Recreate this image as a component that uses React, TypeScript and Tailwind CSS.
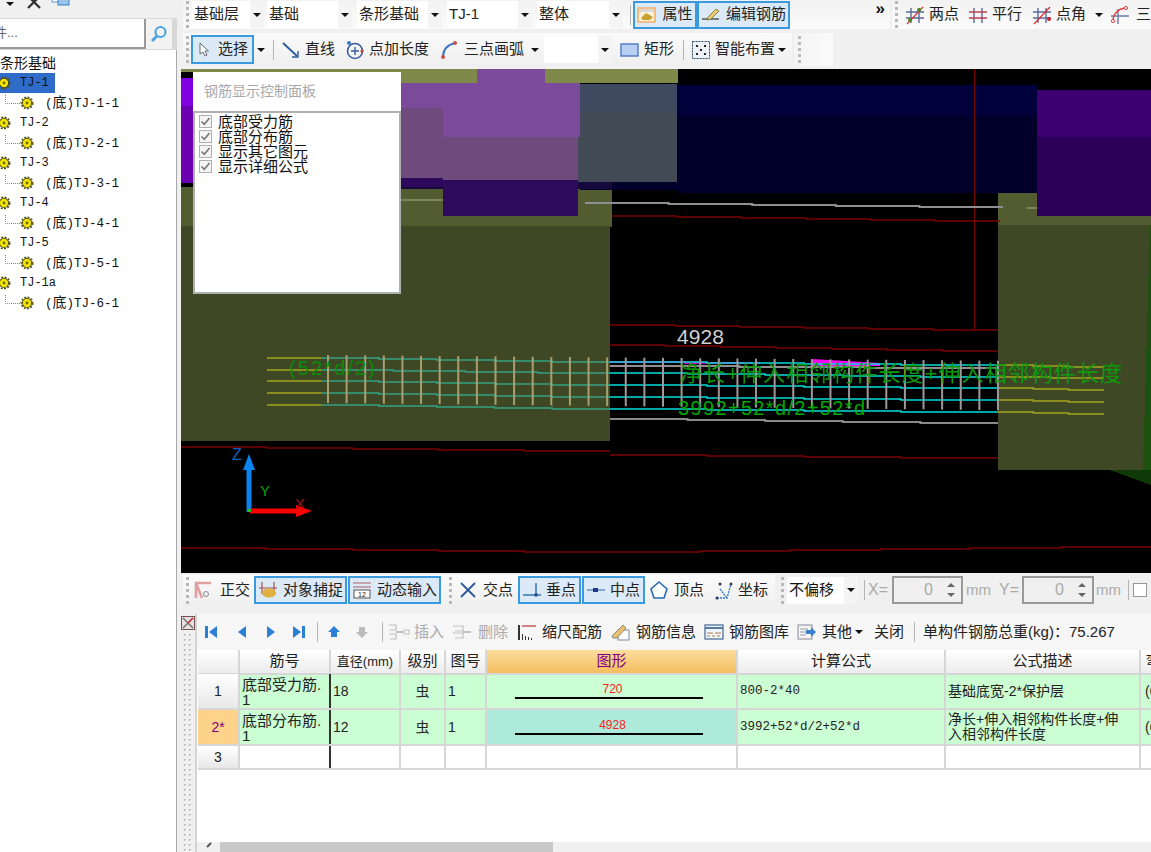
import type { ReactNode } from 'react';

const mono = "font-['Liberation_Mono','Noto_Sans_CJK_SC',monospace]";

function Caret({ className = '' }: { className?: string }) {
  return <span className={`inline-block h-0 w-0 shrink-0 border-x-[4px] border-t-[4px] border-x-transparent border-t-[#111] ${className}`} />;
}

function Grip({ className = '' }: { className?: string }) {
  return (
    <div className={`flex w-[3px] shrink-0 flex-col gap-[3px] ${className}`}>
      {[0, 1, 2, 3, 4].map((i) => (
        <span key={i} className="h-[3px] w-[3px] bg-[#b8b8b8]" />
      ))}
    </div>
  );
}

function Sep({ className = '' }: { className?: string }) {
  return <div className={`h-[20px] w-px shrink-0 bg-[#b4b4b4] ${className}`} />;
}

function Combo({ label, className, arrow = true }: { label: string; className: string; arrow?: boolean }) {
  return (
    <div className={`flex h-[27px] shrink-0 items-center justify-between bg-white pl-[2px] ${className}`}>
      <span className="whitespace-nowrap">{label}</span>
      {arrow && (
        <span className="flex h-full w-[14px] items-center justify-center bg-[#f4f4f4]">
          <Caret />
        </span>
      )}
    </div>
  );
}

function Tool({
  icon,
  label,
  className = '',
  gap = 'gap-[4px]',
  muted = false,
}: {
  icon: ReactNode;
  label: string;
  className?: string;
  gap?: string;
  muted?: boolean;
}) {
  return (
    <div className={`flex shrink-0 items-center whitespace-nowrap ${gap} ${muted ? 'text-[#aaaaaa]' : ''} ${className}`}>
      {icon}
      <span>{label}</span>
    </div>
  );
}

function ActiveBtn({ icon, label, className }: { icon: ReactNode; label: string; className: string }) {
  return (
    <div className={`flex h-[28px] shrink-0 items-center justify-center gap-[5px] whitespace-nowrap border-2 border-[#3a9ae0] bg-[#dbeaf6] ${className}`}>
      {icon}
      <span>{label}</span>
    </div>
  );
}

function Ico({ children, w = 20 }: { children: ReactNode; w?: number }) {
  return (
    <svg width={w} height="20" viewBox={`0 0 ${w} 20`} className="shrink-0" fill="none">
      {children}
    </svg>
  );
}

function Gear({ className = '' }: { className?: string }) {
  return (
    <svg width="14" height="14" viewBox="0 0 14 14" className={`shrink-0 ${className}`}>
      <circle cx="7" cy="7" r="5" fill="#3a3a00" />
      <circle cx="7" cy="7" r="5.8" fill="none" stroke="#55551a" strokeWidth="1.4" strokeDasharray="2 1.4" />
      <circle cx="7" cy="7" r="4.2" fill="#f4e400" />
      <circle cx="7" cy="7" r="1.4" fill="#6a6a10" />
    </svg>
  );
}

function Check() {
  return (
    <span className="flex h-[13px] w-[13px] shrink-0 items-center justify-center border border-[#b0b0b0] bg-[#f4f4f4]">
      <svg width="11" height="11" viewBox="0 0 11 11" fill="none">
        <path d="M1.5 5.5 4.3 8.3 9.5 2" stroke="#777" strokeWidth="1.6" />
      </svg>
    </span>
  );
}

function Spin({ className }: { className: string }) {
  return (
    <div className={`flex h-[28px] shrink-0 items-center justify-between border-2 border-[#999999] pl-1 pr-[6px] text-[#aaaaaa] ${className}`}>
      <span className="flex-1 pr-[14px] text-right text-[16px]">0</span>
      <span className="flex flex-col gap-[6px]">
        <span className="h-0 w-0 border-x-[4px] border-b-[4px] border-x-transparent border-b-[#666]" />
        <span className="h-0 w-0 border-x-[4px] border-t-[4px] border-x-transparent border-t-[#666]" />
      </span>
    </div>
  );
}

// stepped line, the 3D view draws sloped edges as one pixel jogs
function steps(x0: number, y0: number, x1: number, y1: number) {
  const n = Math.max(1, Math.round(Math.abs(y1 - y0)));
  const pts: string[] = [`${x0},${y0}`];
  for (let i = 1; i <= n; i++) {
    const x = x0 + ((x1 - x0) * i) / (n + 1);
    const dir = y1 > y0 ? 1 : -1;
    pts.push(`${x},${y0 + dir * (i - 1)}`, `${x},${y0 + dir * i}`);
  }
  pts.push(`${x1},${y1}`);
  return pts.join(' ');
}

const rebarRows = [
  { a: 358, b: 362, c: 365, d: 367 },
  { a: 370, b: 373, c: 377, d: 378 },
  { a: 381, b: 385, c: 388, d: 390 },
  { a: 393, b: 397, c: 400, d: 402 },
  { a: 405, b: 409, c: 412, d: 414 },
];

const bars = Array.from({ length: 37 }, (_, i) => 328 + i * 18.61);

const redLines: [number, number, number, number][] = [
  [612, 216, 1000, 221],
  [610, 325, 998, 330],
  [610, 345, 998, 351],
  [610, 455, 998, 458],
  [181, 447, 610, 451],
  [181, 548, 610, 552],
  [610, 552, 1151, 547],
];

function Scene() {
  return (
    <svg width="970" height="504" viewBox="181 69 970 504" className="block" shapeRendering="crispEdges">
      <rect x="181" y="69" width="970" height="504" fill="#000" />

      {/* olive top strip */}
      <rect x="181" y="69" width="497" height="14" fill="#7f8a4a" />
      <rect x="477" y="69" width="68" height="14" fill="#7b4a9a" />
      <rect x="181" y="72" width="12" height="6" fill="#000" />

      {/* left column */}
      <rect x="181" y="78" width="220" height="30" fill="#8000e0" />
      <rect x="181" y="106" width="220" height="77" fill="#6a00b0" />

      {/* footing blocks */}
      <rect x="181" y="187" width="431" height="40" fill="#525c30" />
      <rect x="181" y="226" width="429" height="215" fill="#3f4824" />
      <rect x="998" y="193" width="153" height="33" fill="#525c30" />
      <rect x="998" y="225" width="153" height="245" fill="#3f4824" />
      <polygon points="1150,225 1151,225 1151,470 1143,470" fill="#1e5010" />
      <polygon points="1110,470 1151,470 1151,485" fill="#0f3a08" />

      {/* beam and columns */}
      <rect x="580" y="182" width="457" height="8" fill="#00002a" />
      <rect x="400" y="181" width="212" height="8" fill="#14083c" />
      <rect x="677" y="85" width="360" height="30" fill="#00003a" />
      <rect x="677" y="115" width="360" height="78" fill="#00002a" />
      <rect x="578" y="84" width="99" height="27" fill="#3f4a60" />
      <rect x="578" y="111" width="99" height="71" fill="#414a55" />
      <rect x="400" y="83" width="180" height="25" fill="#7b4a9a" />
      <rect x="443" y="108" width="137" height="29" fill="#7b4a9a" />
      <rect x="400" y="108" width="43" height="70" fill="#6f4a7c" />
      <rect x="443" y="137" width="135" height="43" fill="#6f4a7c" />
      <rect x="443" y="180" width="135" height="36" fill="#2d0a5c" />
      <rect x="400" y="178" width="43" height="9" fill="#2d0a5c" />
      <rect x="1037" y="90" width="114" height="47" fill="#3c0070" />
      <rect x="1037" y="137" width="114" height="79" fill="#2c0058" />

      {/* thin lines need antialiasing, crisp edges drops parts of them */}
      <g shapeRendering="geometricPrecision">
        {/* red outline */}
        <line x1="974.5" y1="69" x2="974.5" y2="330" stroke="#7a0000" strokeWidth="1" />
        {redLines.map(([a, b, c, d], i) => (
          <polyline key={i} points={steps(a, b, c, d)} fill="none" stroke="#7a0000" strokeWidth="1.5" />
        ))}

        {/* grey lines */}
        <polyline points={steps(585, 203, 1003, 207)} fill="none" stroke="#909090" strokeWidth="2" />
        <line x1="400" y1="200" x2="443" y2="200" stroke="#a8a890" strokeWidth="1" />
        <line x1="1027" y1="208" x2="1037" y2="208" stroke="#a8a890" strokeWidth="1" />
        <polyline points={steps(610, 419, 998, 423)} fill="none" stroke="#888" strokeWidth="2" />

        {/* rebar */}
        <polyline points={steps(610, 362, 760, 363)} fill="none" stroke="#ff00ff" strokeWidth="1.5" />
        <polygon points="812,359 880,363 880,366 812,366" fill="#ff00ff" />
        <polyline points={steps(610, 366, 998, 368)} fill="none" stroke="#909090" strokeWidth="2" />
        {rebarRows.map((r, i) => (
          <g key={i} fill="none" strokeWidth="1.5">
            <line x1="267" y1={r.a} x2="321" y2={r.a} stroke="#a4a41e" />
            <polyline points={steps(321, r.a, 610, r.b)} stroke="#36a084" />
            <polyline points={steps(610, r.b, 998, r.c)} stroke="#00dcdc" />
            <polyline points={steps(998, r.c, 1104, r.d)} stroke="#a4a41e" />
          </g>
        ))}
        {bars.map((x, i) => (
          <line
            key={i}
            x1={x}
            y1={355 + i * 0.16}
            x2={x}
            y2={403 + i * 0.2}
            stroke={x < 610 ? '#a8a070' : '#a09898'}
            strokeWidth="2"
          />
        ))}
      </g>

      {/* labels */}
      <g shapeRendering="auto">
        <text x="677" y="344" fontSize="21" fill="#d0d0d0" textLength="47">4928</text>
        <text x="289" y="375" fontSize="20" fill="#0a8a0a" textLength="86">(52*d/2)</text>
        <text x="680" y="381" fontSize="22" fill="#0c9a0c" textLength="442">净长+伸入相邻构件长度+伸入相邻构件长度</text>
        <text x="678" y="415" fontSize="20" fill="#00a800" textLength="187">3992+52*d/2+52*d</text>

        {/* axes */}
        <rect x="246.5" y="468" width="5" height="44" fill="#0a84f0" />
        <polygon points="249,454 255,470 243,470" fill="#0a84f0" />
        <rect x="250" y="508.5" width="48" height="5" fill="#ff0000" />
        <polygon points="312,511 296,505 296,517" fill="#ff0000" />
        <rect x="248" y="509" width="3" height="3" fill="#20c020" />
        <text x="232" y="460" fontSize="16" fill="#1060c0">Z</text>
        <text x="260" y="496" fontSize="15" fill="#10a010">Y</text>
        <text x="295" y="509" fontSize="15" fill="#a01010">X</text>
      </g>
    </svg>
  );
}

function ControlPanel() {
  const items = ['底部受力筋', '底部分布筋', '显示其它图元', '显示详细公式'];
  return (
    <div className="absolute left-[12px] top-[3px] flex h-[222px] w-[208px] flex-col bg-white">
      <div className="h-[39px] pl-[11px] pt-[9px] text-[14px] text-[#a8a8a8]">钢筋显示控制面板</div>
      <div className="flex-1 border-2 border-[#b0b0b0] pl-[4px] pt-[1px]">
        {items.map((t) => (
          <div key={t} className="flex h-[15px] items-center gap-[6px] text-[15px] leading-[15px] text-[#111]">
            <Check />
            <span>{t}</span>
          </div>
        ))}
      </div>
    </div>
  );
}

function Tree() {
  const nodes = [
    ['TJ-1', 'TJ-1-1'],
    ['TJ-2', 'TJ-2-1'],
    ['TJ-3', 'TJ-3-1'],
    ['TJ-4', 'TJ-4-1'],
    ['TJ-5', 'TJ-5-1'],
    ['TJ-1a', 'TJ-6-1'],
  ];
  return (
    <div className="flex-1 border-r border-[#a8a8a8] bg-white pt-[3px] text-[14px] text-[#111]">
      <div className="flex h-[20px] items-center whitespace-nowrap">条形基础</div>
      {nodes.map(([name, sub], i) => (
        <div key={name}>
          <div className={`flex h-[20px] items-center ${i === 0 ? 'w-[55px] bg-[#2f6bc8]' : ''}`}>
            <Gear className="-ml-[3px]" />
            <span className={`ml-[9px] text-[12px] ${mono}`}>{name}</span>
          </div>
          <div className="flex h-[20px] items-center">
            <span className="ml-[5px] mb-[8px] h-[9px] w-[15px] border-b border-l border-dotted border-[#888]" />
            <Gear />
            <span className={`ml-[11px] whitespace-nowrap text-[12.5px] ${mono}`}>
              (<span className="text-[14px]">底</span>){sub}
            </span>
          </div>
        </div>
      ))}
    </div>
  );
}

const head = ['', '筋号', '直径(mm)', '级别', '图号', '图形', '计算公式', '公式描述', '弯曲调整'];
const cols = 'grid w-[1014px] grid-cols-[42px_91px_70px_45px_41px_251px_208px_195px_71px]';
const cell = 'border-b-2 border-r-2 border-[#d6d6d6]';

function RebarTable() {
  const rows = [
    { no: '1', name: '底部受力筋.', dia: '18', len: '720', calc: '800-2*40', desc: ['基础底宽-2*保护层'] },
    { no: '2*', name: '底部分布筋.', dia: '12', len: '4928', calc: '3992+52*d/2+52*d', desc: ['净长+伸入相邻构件长度+伸', '入相邻构件长度'] },
  ];
  return (
    <div className="ml-[1px] text-[#222]">
      <div className={`${cols} h-[24px]`}>
        {head.map((h, i) => (
          <div
            key={i}
            className={`flex items-center justify-center whitespace-nowrap ${cell} ${
              i === 5 ? 'bg-gradient-to-b from-[#fbdc9c] to-[#f4bf5e] text-[#800080]' : 'bg-gradient-to-b from-white to-[#ececec]'
            } ${i === 2 ? 'text-[13px]' : 'text-[15px]'}`}
          >
            {h}
          </div>
        ))}
      </div>
      {rows.map((r, i) => (
        <div key={r.no} className={`${cols} h-[36px] bg-[#ccfed4]`}>
          <div className={`flex items-center justify-center text-[14px] ${cell} ${i === 1 ? 'bg-[#fdd28a] text-[#800080]' : 'bg-gradient-to-b from-white to-[#e8e8e8]'}`}>{r.no}</div>
          <div className={`relative pl-[2px] pt-[3px] text-[15px] leading-[15px] ${cell}`}>
            {r.name}
            <br />1
            <span className="absolute -right-[2px] top-0 h-full w-[2px] bg-[#333]" />
          </div>
          <div className={`flex items-center pl-[2px] text-[14px] ${cell}`}>{r.dia}</div>
          <div className={`flex items-center justify-center text-[14px] ${cell}`}>虫</div>
          <div className={`flex items-center pl-[2px] text-[14px] ${cell}`}>1</div>
          <div className={`flex flex-col items-center pr-[6px] pt-[9px] text-[12px] leading-[12px] text-[#ff2020] ${cell} ${i === 1 ? 'bg-[#aeeada]' : ''}`}>
            <span className="ml-[8px]">{r.len}</span>
            <span className="mt-[2px] h-[2px] w-[188px] bg-black" />
          </div>
          <div className={`flex items-center pl-[2px] text-[12.5px] whitespace-nowrap ${mono} ${cell}`}>{r.calc}</div>
          <div className={`flex flex-col justify-center pl-[2px] text-[14px] leading-[15px] whitespace-nowrap ${cell}`}>
            {r.desc.map((d) => (
              <span key={d}>{d}</span>
            ))}
          </div>
          <div className={`flex items-center pl-[4px] text-[14px] ${cell}`}>(0)</div>
        </div>
      ))}
      <div className={`${cols} h-[24px] bg-white`}>
        {head.map((_, i) => (
          <div key={i} className={`relative flex items-center justify-center text-[14px] ${cell} ${i === 0 ? 'bg-gradient-to-b from-white to-[#e8e8e8]' : ''}`}>
            {i === 0 ? '3' : ''}
            {i === 1 && <span className="absolute -right-[2px] top-0 h-full w-[2px] bg-[#333]" />}
          </div>
        ))}
      </div>
    </div>
  );
}

function NavIcon({ d, fill = '#2b7fd6' }: { d: string; fill?: string }) {
  return (
    <svg width="14" height="16" viewBox="0 0 14 16" className="shrink-0">
      <path d={d} fill={fill} />
    </svg>
  );
}

export default function App() {
  return (
    <div className="flex h-[852px] w-[1151px] overflow-hidden bg-[#f0f0f0] font-['Liberation_Sans','Noto_Sans_CJK_SC',sans-serif] text-[15px] text-[#222]">
      {/* left panel */}
      <aside className="flex w-[177px] shrink-0 flex-col">
        <div className="relative flex h-[18px] items-center overflow-hidden">
          <Caret className="ml-[6px] -mt-[10px]" />
          <svg width="16" height="16" viewBox="0 0 16 16" className="ml-[12px] -mt-[12px]">
            <path d="M2 1 14 13M14 1 2 13" stroke="#333" strokeWidth="2.4" />
          </svg>
          <svg width="20" height="18" viewBox="0 0 20 18" className="ml-[9px] -mt-[12px]">
            <rect x="1" y="0" width="12" height="8" fill="#fff" stroke="#5a9ad6" />
            <rect x="7" y="0" width="11" height="11" fill="#9cc4ea" stroke="#3a80c6" />
          </svg>
        </div>
        <div className="flex h-[32px] items-start bg-[#d8d8d8] pt-[1px]">
          <div className="flex h-[30px] w-[146px] items-center border-b-2 border-r-2 border-[#9a9a9a] bg-white text-[13px] text-[#666]">
            <span className="-ml-[6px] whitespace-nowrap">件...</span>
          </div>
          <div className="flex h-[30px] w-[26px] items-center justify-center bg-[#f2f2f2]">
            <svg width="18" height="18" viewBox="0 0 18 18" fill="none">
              <circle cx="10.5" cy="7" r="5" stroke="#4da3e0" strokeWidth="2.2" />
              <path d="M7 11 2 16" stroke="#4da3e0" strokeWidth="3" />
            </svg>
          </div>
        </div>
        <Tree />
      </aside>

      <main className="ml-[4px] flex w-[970px] shrink-0 flex-col overflow-hidden">
        {/* row 1 */}
        <div className="flex h-[29px] items-center">
          <div className="ml-[2px] flex h-[29px] w-[707px] shrink-0 items-center bg-gradient-to-b from-[#f2f2f2] to-[#fbfbfb]">
            <Grip className="ml-[3px]" />
            <Combo label="基础层" className="ml-[3px] w-[72px]" />
            <Combo label="基础" className="ml-[3px] w-[85px]" />
            <Combo label="条形基础" className="ml-[5px] w-[85px]" />
            <Combo label="TJ-1" className="ml-[5px] w-[85px]" />
            <Combo label="整体" className="ml-[5px] w-[86px]" />
            <Sep className="ml-[7px]" />
            <ActiveBtn
              className="ml-[2px] w-[64px]"
              label="属性"
              icon={
                <Ico w={20}>
                  <rect x="1" y="3" width="17" height="14" fill="#fdf1d8" stroke="#f0a860" strokeWidth="1.4" />
                  <rect x="2" y="4" width="15" height="3" fill="#d8d8d8" />
                  <path d="M4 13 9 8l7 4-3 3H6Z" fill="#c8a030" />
                </Ico>
              }
            />
            <ActiveBtn
              className="w-[93px]"
              label="编辑钢筋"
              icon={
                <Ico w={20}>
                  <path d="M1 14h17" stroke="#333" strokeWidth="1.2" />
                  <path d="M7 12 15 4l3 2-8 8-4 1Z" fill="#e8c870" stroke="#7a6a3a" strokeWidth="0.8" />
                </Ico>
              }
            />
            <span className="ml-auto mr-[5px] -mt-[12px] text-[17px] font-bold leading-none text-[#111]">»</span>
          </div>
          <div className="ml-[2px] flex h-[29px] flex-1 items-center whitespace-nowrap bg-gradient-to-b from-[#f2f2f2] to-[#fbfbfb]">
            <Grip className="ml-[3px]" />
            <Tool
              className="ml-[7px]"
              label="两点"
              icon={
                <Ico>
                  <path d="M6 3v15M14 3v15M1 7h18M1 13h18" stroke="#5a6a9a" strokeWidth="1.4" />
                  <path d="M2 19 18 2" stroke="#e03030" strokeWidth="1.2" />
                  <circle cx="5" cy="15" r="2" fill="#4a8a20" />
                  <circle cx="14" cy="5" r="2" fill="#4a8a20" />
                </Ico>
              }
            />
            <Tool
              className="ml-[9px]"
              label="平行"
              icon={
                <Ico>
                  <path d="M6 3v15M14 3v15" stroke="#5a6a9a" strokeWidth="1.4" />
                  <path d="M1 7h18M1 13h18" stroke="#c04050" strokeWidth="1.4" />
                </Ico>
              }
            />
            <Tool
              className="ml-[10px]"
              label="点角"
              icon={
                <Ico>
                  <path d="M6 3v15M14 3v15M1 7h18M1 13h18" stroke="#5a6a9a" strokeWidth="1.4" />
                  <path d="M2 19 18 2" stroke="#e03030" strokeWidth="1.2" />
                  <circle cx="17" cy="14" r="2" fill="#d02020" />
                </Ico>
              }
            />
            <Caret className="ml-[9px]" />
            <span className="ml-[7px]">
              <Ico>
                <path d="M8 4v15M1 11h18" stroke="#6a7aaa" strokeWidth="1.4" />
                <path d="M3 16C3 9 8 4 15 3" stroke="#e04040" strokeWidth="1.4" />
                <circle cx="3" cy="16" r="1.6" fill="#fff" stroke="#e04040" />
                <circle cx="16" cy="3" r="1.6" fill="#fff" stroke="#e04040" />
              </Ico>
            </span>
            <span className="ml-[6px]">三点</span>
          </div>
        </div>

        {/* row 2 */}
        <div className="mt-[4px] flex h-[33px] shrink-0 items-center">
          <div className="ml-[2px] flex h-[33px] w-[609px] shrink-0 items-center bg-gradient-to-b from-[#fafafa] to-[#efefef]">
            <Grip className="ml-[3px]" />
            <div className="ml-[2px] flex h-[29px] w-[63px] shrink-0 items-center gap-[8px] border-2 border-[#3a9ae0] bg-[#dbeaf6] pl-[5px]">
              <svg width="12" height="16" viewBox="0 0 12 16" className="shrink-0">
                <path d="M2 1v11l3-2 2 4 2-1-2-4h3.500Z" fill="#fff" stroke="#667" />
              </svg>
              <span>选择</span>
            </div>
            <Caret className="ml-[3px]" />
            <Sep className="ml-[8px]" />
            <Tool
              className="ml-[7px]"
              label="直线"
              icon={
                <Ico>
                  <path d="M2 3 16 16" stroke="#2a5a9a" strokeWidth="1.800" />
                  <path d="M17 11v6h-6" stroke="#2a5a9a" strokeWidth="1.400" />
                </Ico>
              }
            />
            <Tool
              className="ml-[10px]"
              label="点加长度"
              icon={
                <Ico>
                  <circle cx="10" cy="11" r="7.500" stroke="#3a5a9a" strokeWidth="1.600" />
                  <path d="M6 11h8M10 7v8" stroke="#3a5a9a" strokeWidth="1.400" />
                  <circle cx="4" cy="3" r="2" fill="#3a7ac0" />
                  <circle cx="17" cy="11" r="1.600" fill="#c04040" />
                </Ico>
              }
            />
            <Tool
              className="ml-[11px]"
              label="三点画弧"
              icon={
                <Ico>
                  <path d="M3 17C3 10 7 5 15 3" stroke="#3a7ac0" strokeWidth="2" />
                  <circle cx="3" cy="17" r="2" fill="#d05040" />
                  <circle cx="15" cy="3" r="2" fill="#d05040" />
                </Ico>
              }
            />
            <Caret className="ml-[7px]" />
            <Combo label="" className="ml-[5px] w-[68px]" />
            <Tool
              className="ml-[8px]"
              label="矩形"
              icon={
                <Ico>
                  <rect x="1" y="4" width="17" height="12" fill="#b8d0f4" stroke="#4a7ac8" strokeWidth="1.400" />
                </Ico>
              }
            />
            <Sep className="ml-[9px]" />
            <Tool
              className="ml-[7px]"
              label="智能布置"
              icon={
                <Ico>
                  <rect x="1.500" y="1.500" width="17" height="17" fill="#eef2f8" stroke="#2a4a6a" strokeDasharray="2 1" />
                  <path d="M5 5h2v2H5ZM13 5h2v2h-2ZM9 9h2v2H9ZM5 13h2v2H5ZM13 13h2v2h-2Z" fill="#222" />
                </Ico>
              }
            />
            <Caret className="ml-[3px]" />
          </div>
          <div className="ml-[2px] flex h-[33px] w-[39px] shrink-0 items-center bg-gradient-to-r from-[#f4f4f4] to-[#fafafa] pl-[4px]">
            <Grip />
          </div>
        </div>

        {/* 3D view */}
        <div className="relative mt-[3px] h-[504px] shrink-0">
          <Scene />
          <ControlPanel />
        </div>

        {/* snap bar */}
        <div className="flex h-[32px] shrink-0 items-end">
          <div className="ml-[2px] flex h-[30px] w-[592px] shrink-0 items-center bg-gradient-to-b from-[#fbfbfb] to-[#f0f0f0]">
            <Grip className="ml-[3px]" />
            <Tool
              className="ml-[4px]"
              gap="gap-[7px]"
              label="正交"
              icon={
                <Ico>
                  <path d="M3 18V3h15M3 3l6 15" stroke="#e0a0a0" strokeWidth="2.600" />
                  <circle cx="13" cy="14" r="2.500" stroke="#889" />
                </Ico>
              }
            />
            <ActiveBtn
              className="ml-[4px] w-[93px]"
              label="对象捕捉"
              icon={
                <Ico>
                  <path d="M1 8h18" stroke="#b06060" strokeWidth="1.200" />
                  <path d="M4 2v12M16 2v12" stroke="#a05050" strokeWidth="1.200" />
                  <ellipse cx="11" cy="13" rx="7" ry="4.500" fill="#e0b040" />
                </Ico>
              }
            />
            <ActiveBtn
              className="ml-[1px] w-[93px]"
              label="动态输入"
              icon={
                <Ico>
                  <path d="M1 3h18M1 7h18" stroke="#b06060" strokeWidth="1.200" />
                  <rect x="2" y="10" width="16" height="8" fill="#fff" stroke="#555" />
                  <text x="6" y="17" fontSize="7" fill="#222">12</text>
                </Ico>
              }
            />
            <Grip className="ml-[8px]" />
            <Tool
              className="ml-[6px]"
              gap="gap-[5px]"
              label="交点"
              icon={
                <Ico>
                  <path d="M3 3 17 17M17 3 3 17" stroke="#2a5a9a" strokeWidth="1.800" />
                </Ico>
              }
            />
            <ActiveBtn
              className="ml-[5px] w-[63px]"
              label="垂点"
              icon={
                <Ico w={18}>
                  <path d="M0 15h18" stroke="#2a6ab0" strokeWidth="1.400" />
                  <path d="M13 3v13" stroke="#2a6ab0" strokeWidth="1.400" />
                  <rect x="11.500" y="13.500" width="3" height="3" fill="#1a4a8a" />
                </Ico>
              }
            />
            <ActiveBtn
              className="ml-[1px] w-[63px]"
              label="中点"
              icon={
                <Ico w={18}>
                  <path d="M0 10h18" stroke="#5a8ac0" strokeWidth="1.400" />
                  <rect x="6" y="8" width="5" height="4" fill="#1a3a8a" />
                </Ico>
              }
            />
            <Tool
              className="ml-[4px]"
              gap="gap-[5px]"
              label="顶点"
              icon={
                <Ico>
                  <path d="M10 2 18 9l-3 9H5L2 9Z" stroke="#2a6ab0" strokeWidth="1.600" fill="#fff" />
                </Ico>
              }
            />
            <Tool
              className="ml-[10px]"
              label="坐标"
              icon={
                <Ico>
                  <path d="M3 18h10l4-14M6 9l7 9" stroke="#3a7ac0" strokeWidth="1.400" strokeDasharray="2 1" />
                  <circle cx="3" cy="18" r="1.500" fill="#335" />
                  <circle cx="6" cy="4" r="1.500" fill="#335" />
                  <circle cx="17" cy="4" r="1.500" fill="#335" />
                </Ico>
              }
            />
          </div>
          <div className="ml-[2px] flex h-[30px] flex-1 items-center text-[#aaaaaa]">
            <Grip className="ml-[4px]" />
            <Combo label="不偏移" className="ml-[3px] w-[71px] text-[#111]" />
            <Sep className="ml-[6px]" />
            <span className="ml-[3px] w-[20px] text-[16px]">X=</span>
            <Spin className="ml-[4px] w-[71px]" />
            <span className="ml-[3px] w-[27px] text-[15px]">mm</span>
            <span className="ml-[6px] w-[19px] text-[16px]">Y=</span>
            <Spin className="ml-[4px] w-[72px]" />
            <span className="ml-[2px] w-[27px] text-[15px]">mm</span>
            <Sep className="ml-[5px]" />
            <span className="ml-[4px] h-[14px] w-[14px] shrink-0 border border-[#999] bg-white" />
          </div>
        </div>

        {/* rebar panel */}
        <div className="mt-[9px] flex min-h-0 flex-1">
          <div className="relative w-[16px] shrink-0 border-r-2 border-[#d4d4d4]">
            <svg width="14" height="14" viewBox="0 0 14 14" className="absolute left-0 top-[2px]">
              <rect x="0.500" y="0.500" width="13" height="13" fill="#e8e0e0" stroke="#705050" />
              <path d="M2 2 12 12M12 2 2 12" stroke="#777" strokeWidth="1.600" />
              <path d="M12 2 7 7" stroke="#d04040" strokeWidth="1.600" />
            </svg>
            <div className="absolute inset-x-[1px] bottom-0 top-[18px] bg-[radial-gradient(#bcbcbc_1px,transparent_1px)] bg-[length:5px_5px]" />
          </div>
          <div className="flex min-w-0 flex-1 flex-col bg-white">
            <div className="flex h-[36px] shrink-0 items-center bg-[#f6f6f6] whitespace-nowrap">
              <span className="ml-[7px]"><NavIcon d="M1 2h3v12H1ZM13 2v12L5 8Z" /></span>
              <span className="ml-[17px]"><NavIcon d="M11 2v12L3 8Z" /></span>
              <span className="ml-[15px]"><NavIcon d="M3 2v12l8-6Z" /></span>
              <span className="ml-[14px]"><NavIcon d="M1 2v12l8-6ZM10 2h3v12h-3Z" /></span>
              <Sep className="ml-[11px]" />
              <span className="ml-[9px]"><NavIcon d="M7 2 13 8H10v5H4V8H1Z" /></span>
              <span className="ml-[14px]"><NavIcon d="M7 14 13 8H10V3H4v5H1Z" fill="#bbbbbb" /></span>
              <Sep className="ml-[13px]" />
              <Tool
                className="ml-[5px]"
                muted
                label="插入"
                icon={
                  <Ico w={22}>
                    <path d="M1 3h7v5H2M1 12h7v5H2" stroke="#c0c0c0" strokeWidth="1.200" />
                    <path d="M8 10h8" stroke="#aaa" strokeWidth="1.400" />
                    <rect x="16" y="8" width="5" height="4" stroke="#c0c0c0" />
                  </Ico>
                }
              />
              <Tool
                className="ml-[8px]"
                muted
                label="删除"
                icon={
                  <Ico w={22}>
                    <path d="M1 4h10v5H3M1 11h10v5H3" stroke="#c0c0c0" strokeWidth="1.200" />
                    <path d="M11 10h8" stroke="#aaa" strokeWidth="1.400" />
                  </Ico>
                }
              />
              <Tool
                className="ml-[9px]"
                gap="gap-[5px]"
                label="缩尺配筋"
                icon={
                  <Ico>
                    <path d="M1 3h2v15H1ZM5 12h1v6H5ZM8 14h1v4H8ZM11 15h1v3h-1ZM14 16h1v2h-1Z" fill="#333" />
                    <path d="M5 4h14" stroke="#c05050" strokeWidth="1.400" />
                  </Ico>
                }
              />
              <Tool
                className="ml-[8px]"
                gap="gap-[6px]"
                label="钢筋信息"
                icon={
                  <Ico>
                    <rect x="8" y="8" width="11" height="10" fill="#fff" stroke="#7a8a9a" />
                    <path d="M2 14 13 3l3 3-9 10H3Z" fill="#e8c070" stroke="#776" strokeWidth="0.800" />
                  </Ico>
                }
              />
              <Tool
                className="ml-[8px]"
                gap="gap-[5px]"
                label="钢筋图库"
                icon={
                  <Ico>
                    <rect x="1" y="3" width="18" height="14" fill="#eef4fb" stroke="#5a7aa0" strokeWidth="1.400" />
                    <path d="M1 6h18" stroke="#5a7aa0" strokeWidth="2" />
                    <path d="M3 11h6M11 11h6M3 14h3M8 14h3M13 14h3" stroke="#b08040" />
                  </Ico>
                }
              />
              <Tool
                className="ml-[8px]"
                gap="gap-[5px]"
                label="其他"
                icon={
                  <Ico>
                    <rect x="1" y="3" width="14" height="14" fill="#f4f4f4" stroke="#889" />
                    <path d="M3 7h8M3 10h6M3 13h6" stroke="#99a" />
                    <path d="M9 8h5V5l5 5-5 5v-3H9Z" fill="#3a80d0" />
                  </Ico>
                }
              />
              <Caret className="ml-[3px]" />
              <span className="ml-[11px]">关闭</span>
              <Sep className="ml-[10px]" />
              <span className="ml-[8px]">单构件钢筋总重(kg)：75.267</span>
            </div>
            <RebarTable />
            <div className="flex-1" />
            <div className="flex h-[10px] w-full shrink-0 bg-[#f0f0f0]">
              <div className="flex w-[23px] items-start justify-center">
                <svg width="10" height="10" viewBox="0 0 10 10" fill="none">
                  <path d="M7 1 3 5" stroke="#555" strokeWidth="2" />
                </svg>
              </div>
              <div className="w-[333px] bg-[#c8c8c8]" />
            </div>
          </div>
        </div>
      </main>
    </div>
  );
}
